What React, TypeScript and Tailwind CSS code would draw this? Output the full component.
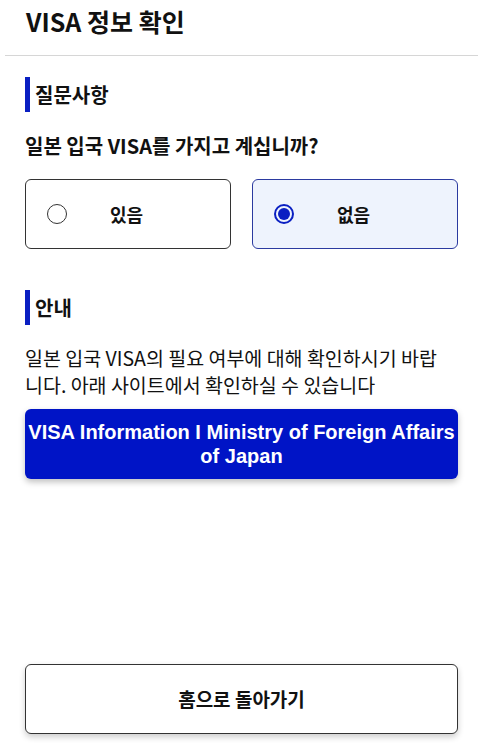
import { useState } from "react";

const FONT = { fontFamily: '"Noto Sans CJK KR", "Noto Sans", sans-serif' };

function SectionTitle({ label }: { label: string }) {
  return (
    <div className="flex items-center h-[35px]">
      <span className="w-[5px] h-[35px] bg-[#0a1fc2]" />
      <span className="ml-[5px] text-[20px] font-bold text-[#111]">{label}</span>
    </div>
  );
}

function Option({ label, selected, onClick }: { label: string; selected: boolean; onClick: () => void }) {
  return (
    <button
      type="button"
      onClick={onClick}
      className={`flex items-center h-[70px] rounded-[6px] border pl-[21px] ${
        selected ? "bg-[#eef3fd] border-[#2b3aa0]" : "bg-white border-[#333]"
      }`}
    >
      {selected ? (
        <span className="w-[20px] h-[20px] rounded-full border-[2px] border-[#0a1fc2] flex items-center justify-center">
          <span className="w-[12px] h-[12px] rounded-full bg-[#0a1fc2]" />
        </span>
      ) : (
        <span className="w-[20px] h-[20px] rounded-full border border-[#333]" />
      )}
      <span className="ml-[43px] text-[18px] font-bold text-[#111]">{label}</span>
    </button>
  );
}

export default function App() {
  const [hasVisa, setHasVisa] = useState(false);

  return (
    <div className="min-h-[744px] bg-white flex flex-col" style={FONT}>
      <header className="h-[56px] mx-[5px] border-b border-[#d6d6d6] flex items-start pt-[3px] pl-[21px]">
        <h1 className="text-[25px] font-bold text-[#111]">VISA 정보 확인</h1>
      </header>

      <main className="px-[25px] flex flex-col flex-1">
        <div className="mt-[21px]">
          <SectionTitle label="질문사항" />
        </div>
        <p className="mt-[19px] text-[20px] font-bold text-[#111]">일본 입국 VISA를 가지고 계십니까?</p>

        <div className="mt-[18px] grid grid-cols-2 gap-[21px]">
          <Option label="있음" selected={hasVisa} onClick={() => setHasVisa(true)} />
          <Option label="없음" selected={!hasVisa} onClick={() => setHasVisa(false)} />
        </div>

        <div className="mt-[41px]">
          <SectionTitle label="안내" />
        </div>
        <p className="mt-[19px] pr-[4px] text-[19.5px] leading-[27px] text-[#111]">
          일본 입국 VISA의 필요 여부에 대해 확인하시기 바랍니다. 아래 사이트에서 확인하실 수 있습니다
        </p>

        <a
          href="#"
          className="mt-[11px] h-[70px] rounded-[6px] bg-[#0014c6] shadow-[0_3px_6px_rgba(0,0,0,0.25)] flex items-center justify-center text-center text-white font-bold text-[20px] leading-[24px]"
          style={{ fontFamily: '"Liberation Sans", Arial, sans-serif' }}
        >
          VISA Information I Ministry of Foreign Affairs
          <br />
          of Japan
        </a>

        <div className="flex-1" />

        <button
          type="button"
          className="mb-[10px] h-[70px] rounded-[6px] border border-[#333] bg-white shadow-[0_3px_6px_rgba(0,0,0,0.2)] text-[19px] font-bold text-[#111]"
        >
          홈으로 돌아가기
        </button>
      </main>
    </div>
  );
}
